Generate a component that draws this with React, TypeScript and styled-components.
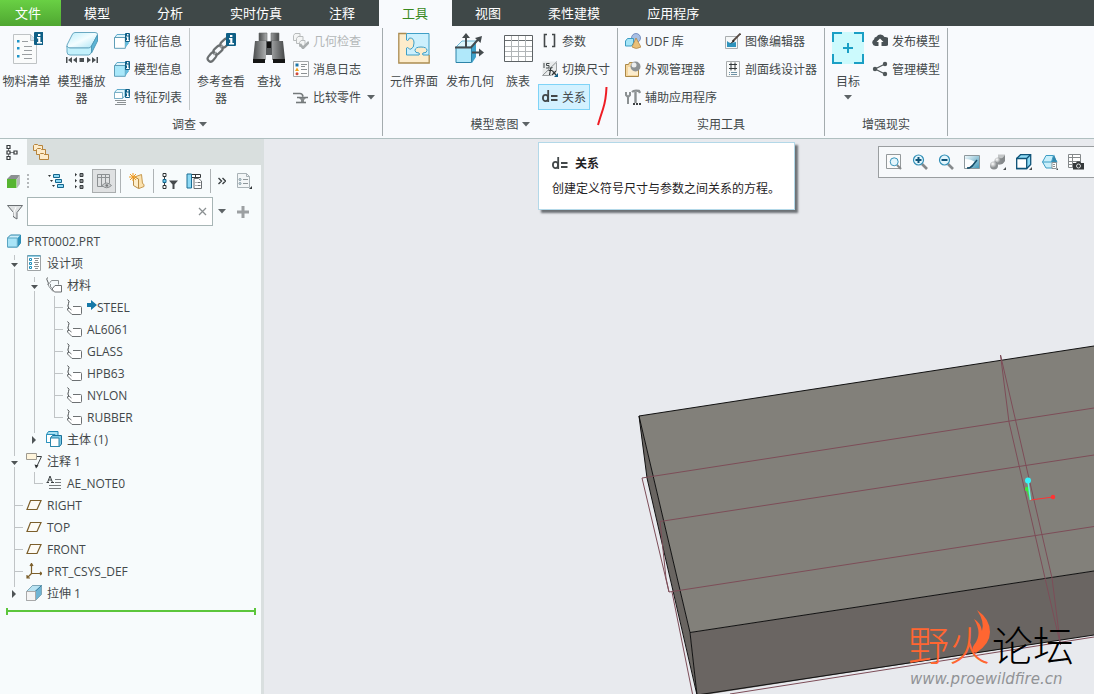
import React from 'react';
import styled, { createGlobalStyle, css } from 'styled-components';

const GlobalStyle = createGlobalStyle`
  * { box-sizing: border-box; }
  body {
    margin: 0;
    font-family: "Open Sans", "Noto Sans CJK SC", sans-serif;
    font-size: 12px;
    line-height: 17px;
    color: #43484a;
  }
  button, input { font: inherit; color: inherit; }
  svg { display: block; flex: none; }
`;

const Window = styled.div`
  display: flex;
  flex-direction: column;
  height: 100vh;
  overflow: hidden;
`;

/* ---------- menu tabs ---------- */

const MenuBar = styled.nav`
  display: flex;
  flex: none;
  height: 26px;
  background: #3f4848;
`;

const MenuTab = styled.button<{ $kind?: 'file' | 'active' }>`
  border: 0;
  padding: 0 24px 0 23px;
  font-size: 13px;
  line-height: 24px;
  white-space: nowrap;
  color: #fff;
  background: transparent;
  ${(p) => p.$kind === 'file' && css`
    padding: 0 20px 0 15px;
    background: linear-gradient(#69d044, #4fa631);
  `}
  ${(p) => p.$kind === 'active' && css`
    color: #3a8a1e;
    background: #f8fafd;
  `}
`;

/* ---------- ribbon ---------- */

const Ribbon = styled.header`
  display: flex;
  flex: none;
  height: 113px;
  padding-top: 2px;
  background: #f8fafd;
  border-bottom: 1px solid #b0bfc0;
`;

const Group = styled.section<{ $flush?: boolean }>`
  display: flex;
  flex-direction: column;
  flex: none;
  height: 108px;
  padding: 0 3px 0 ${(p) => (p.$flush ? 0 : 3)}px;
  border-right: 1px solid #a4abae;
`;

const GroupBody = styled.div`
  display: flex;
  height: 84px;
`;

const GroupLabel = styled.div`
  display: flex;
  flex: 1;
  align-items: center;
  justify-content: center;
  gap: 3px;
`;

const Divider = styled.div`
  width: 1px;
  height: 82px;
  margin: 0 3px;
  background: #c3c8ca;
`;

const BigButton = styled.button<{ $width: number }>`
  display: flex;
  flex-direction: column;
  align-items: center;
  gap: 9px;
  width: ${(p) => p.$width}px;
  padding: 4px 0 0;
  border: 0;
  background: transparent;
`;

const BigLabel = styled.span`
  display: flex;
  flex-direction: column;
  align-items: center;
  gap: 5px;
  width: 48px;
  line-height: 17px;
`;

const SmallColumn = styled.div`
  display: flex;
  flex-direction: column;
  align-items: flex-start;
  gap: 2px;
`;

const SmallButton = styled.button<{ $hot?: boolean }>`
  display: flex;
  align-items: center;
  gap: 4px;
  height: 26px;
  padding: 0 4px;
  border: 0;
  white-space: nowrap;
  background: transparent;
  &:disabled { color: #b3b7b8; }
  ${(p) => p.$hot && css`
    background: #d3f1ff;
    box-shadow: inset 0 0 0 1px #7fd3f7;
  `}
`;

const MenuMark = styled.span`
  margin-left: 2px;
`;

const HotItem = styled.div`
  position: relative;
`;

const Tooltip = styled.div`
  position: absolute;
  z-index: 5;
  top: 58px;
  left: 0;
  display: flex;
  flex-direction: column;
  gap: 8px;
  width: 257px;
  height: 68px;
  padding: 12px 13px;
  color: #1f2224;
  background: #fff;
  border: 1px solid #b3d8e8;
  box-shadow: 3px 3px 2px #6d7276;
`;

const TooltipTitle = styled.strong`
  display: flex;
  align-items: center;
  gap: 7px;
`;

const PenMark = styled.svg`
  position: absolute;
  z-index: 4;
  top: 2px;
  left: 58px;
`;

/* ---------- workspace ---------- */

const Workspace = styled.main`
  display: flex;
  flex: 1;
  min-height: 0;
`;

const Sidebar = styled.aside`
  display: flex;
  flex-direction: column;
  flex: none;
  width: 264px;
  background: #f7fbfc;
  border-right: 3px solid #d9dfdf;
`;

const PanelTabs = styled.div`
  display: flex;
  height: 26px;
  background: #d9dfde;
`;

const PanelTab = styled.button<{ $active?: boolean }>`
  display: flex;
  align-items: center;
  justify-content: center;
  width: ${(p) => (p.$active ? 27 : 30)}px;
  padding: 0 2px 0 0;
  border: 0;
  background: ${(p) => (p.$active ? '#f7fbfc' : 'transparent')};
`;

const PanelTools = styled.div`
  display: flex;
  align-items: center;
  height: 32px;
`;

const ToolButton = styled.button<{ $width?: number; $pressed?: boolean }>`
  display: flex;
  align-items: center;
  justify-content: center;
  width: ${(p) => p.$width ?? 24}px;
  height: 24px;
  padding: 0;
  border: ${(p) => (p.$pressed ? '1px solid #a9adae' : '0')};
  background: ${(p) => (p.$pressed ? '#dfe1e2' : 'transparent')};
`;

const ToolDivider = styled.div`
  width: 1px;
  height: 24px;
  margin: 0 4px;
  background: #aeb3b5;
`;

const Grip = styled.div`
  width: 2px;
  height: 14px;
  margin: 0 15px 0 1px;
  background: repeating-linear-gradient(#b4b8ba 0 2px, transparent 2px 4px);
`;

const FilterRow = styled.form`
  display: flex;
  align-items: center;
  height: 29px;
  margin-bottom: 4px;
`;

const FilterIcon = styled.label`
  width: 27px;
  padding-left: 7px;
`;

const FilterField = styled.div`
  display: flex;
  align-items: center;
  width: 186px;
  height: 29px;
  background: #fff;
  border: 1px solid #a7b5b5;
`;

const FilterInput = styled.input`
  flex: 1;
  min-width: 0;
  height: 27px;
  padding: 0 6px;
  border: 0;
  outline: 0;
  background: transparent;
`;

const Tree = styled.ul`
  margin: 0;
  padding: 0 0 0 4px;
  list-style: none;
`;

const TreeRow = styled.li`
  display: flex;
  align-items: center;
  height: 22px;
  white-space: nowrap;
`;

const TreeIcon = styled.span`
  width: 16px;
  margin: 0 5px 0 2px;
`;

const InsertLine = styled.div`
  height: 7px;
  margin: 4px 5px 0 6px;
  border: solid #5cc63c;
  border-width: 0 2px;
  background: linear-gradient(transparent 2px, #5cc63c 2px 4px, transparent 4px);
`;

const Canvas = styled.section`
  position: relative;
  flex: 1;
  min-width: 0;
  overflow: hidden;
  background: #e8eaee;
`;

const ViewTools = styled.div`
  position: absolute;
  top: 7px;
  right: 0;
  display: flex;
  align-items: center;
  height: 32px;
  padding: 0 5px 0 2px;
  background: #f7f9fb;
  border: 1px solid #9a9ea0;
  border-right: 0;
`;

const Watermark = styled.div`
  position: absolute;
  right: 18px;
  bottom: 6px;
  width: 168px;
  color: #000;
`;

const WatermarkName = styled.div`
  display: flex;
  gap: 2px;
  font-family: "Liberation Sans", "Noto Sans CJK SC", sans-serif;
  font-size: 41px;
  font-style: oblique 8deg;
  font-weight: 300;
  line-height: 46px;
  white-space: nowrap;
`;

const Ember = styled.span`
  color: #ff6631;
`;

const WatermarkUrl = styled.div`
  padding-left: 2px;
  font: italic 15px/18px "DejaVu Sans", sans-serif;
  color: #919396;
`;

const Flame = styled.svg`
  position: absolute;
  top: -14px;
  left: 60px;
`;

/* ---------- icons ---------- */

type IconProps = { children: React.ReactNode; size?: number };

const Icon = ({ children, size = 16 }: IconProps) => (
  <svg width={size} height={size} viewBox={`0 0 ${size} ${size}`} fill="none" aria-hidden="true">
    {children}
  </svg>
);

const Caret = () => (
  <svg width="8" height="5" viewBox="0 0 8 5" aria-hidden="true"><path d="M0 0h8L4 4.6z" fill="#5d6366" /></svg>
);

const InfoBadge = ({ x, y, big }: { x: number; y: number; big?: boolean }) => (
  <g transform={`translate(${x} ${y})`}>
    <rect width={big ? 10 : 5} height={big ? 13 : 9} rx="1" fill="#0f5f86" />
    {big ? <path d="M4 2h2.400v2H4zM3 5h3.400v5H8v1.500H3V10h1.200V6.500H3z" fill="#fff" />
      : <path d="M2 1h1.500v1.500H2zM1.200 3.400h2.300V7H4.200v1H1.200V7H2V4.400h-.8z" fill="#fff" />}
  </g>
);

const BomIcon = () => (
  <Icon size={32}>
    <path d="M2.500 2.500h17l6 6v23h-23z" fill="#fafbfb" stroke="#bfc3c5" />
    <path d="M19.500 2.500v6h6" fill="#d3e5f0" stroke="#bfc3c5" />
    <path d="M6 8h2.500v2.500H6zM6 15h2.500v2.500H6zM6 23h2.500v2.500H6z" fill="#1e94c8" />
    <path d="M11 9.500h6M13 14.500h8M13 18.500h8M11 22.500h10M13 26.500h8" stroke="#9a9ea1" />
    <InfoBadge big x={23} y={0} />
  </Icon>
);

const PlayerIcon = () => (
  <Icon size={32}>
    <defs>
      <linearGradient id="glass" x1="0" x2="1" y2="1"><stop stopColor="#b9eefb" /><stop offset=".5" stopColor="#f4fdff" /><stop offset="1" stopColor="#a5e2f4" /></linearGradient>
    </defs>
    <path d="M9 .5h20q3 0 2.500 2.500l-6 11q-1 2-3 2H3q-3 0-2-3L6 3q1-2.500 3-2.500z" fill="url(#glass)" stroke="#6aa9c2" />
    <path d="M1 14q1 2 3 2h18.500q2 0 3-2v6q-1 3-3 3H4q-3 0-3-3z" fill="#c3f1fc" stroke="#6aa9c2" />
    <path d="M25.500 14l6-11v6l-6 12z" fill="#5cb5d6" stroke="#4f9ab9" />
    <path d="M0 25h1.500v6H0zM6 25v6l-4-3zM11 25v6l-4-3zM13.500 26h4.500v4h-4.500zM21 25v6l4-3zM26 25v6l4-3zM30.500 25H32v6h-1.500z" fill="#4a4f52" />
  </Icon>
);

const FeatureInfoIcon = ({ fill }: { fill: string }) => (
  <Icon>
    <path d="M3 1.500h11v9l-3 4H.5V5z" fill="#dff4fb" stroke="#5faaca" />
    <path d="M.5 4.500h10.800v10.800H.5z" fill={fill} stroke="#5f9eb8" />
    <path d="M11.500 4.500l3-3v9l-3 4z" fill="#67bede" />
    <InfoBadge x={11} y={0} />
  </Icon>
);

const FeatureListIcon = () => (
  <Icon>
    <path d="M.5 3.500l2.500-3h8v6l-2.500 3h-8z" fill="#e4f6fc" stroke="#5faaca" />
    <path d="M.5 3.500h8v6h-8z" fill="#fff" stroke="#7db0c6" />
    <path d="M1 11.500h11M3 13.500h9M1 15.500h11" stroke="#8c9194" />
    <InfoBadge x={11} y={0} />
  </Icon>
);

const ReferenceIcon = () => (
  <Icon size={32}>
    <g stroke="#6b6f71" strokeWidth="2.200">
      <rect x="2" y="22" width="10" height="6" rx="3" transform="rotate(-50 7 25)" />
      <rect x="8" y="15" width="10" height="6" rx="3" transform="rotate(-42 13 18)" />
      <rect x="15" y="8" width="10" height="6" rx="3" transform="rotate(-42 20 11)" />
    </g>
    <path d="M8.500 23l3-3M15 16l3-3" stroke="#a3a7a9" strokeWidth="1.500" />
    <InfoBadge big x={21} y={1} />
  </Icon>
);

const BinocularsIcon = () => (
  <Icon size={32}>
    <defs>
      <linearGradient id="barrel" x1="0" x2="1"><stop stopColor="#4a4c4d" /><stop offset=".45" stopColor="#b8babb" /><stop offset="1" stopColor="#454748" /></linearGradient>
    </defs>
    <path d="M6 1h8v8H6zM18 1h8v8h-8z" fill="url(#barrel)" stroke="#6a6c6d" strokeWidth=".6" />
    <path d="M2 9h11v19H0zM19 9h11l2 19H19z" fill="url(#barrel)" />
    <path d="M13 9h6v14h-6z" fill="#55585a" />
    <path d="M14 10h4v6h-4z" fill="#111" />
    <path d="M0 27h12v4H0zM20 27h12v4H20z" fill="#151515" />
  </Icon>
);

const GeometryCheckIcon = () => (
  <Icon>
    <g fill="#f4f5f5" stroke="#b9bcbd">
      <path d="M.5 2.500l1.500-2h5v5l-1.500 2h-5z" /><path d="M3.500 5.500l1.500-2h5v5l-1.500 2h-5z" /><path d="M6.500 9.500l1.500-2h4v4l-1.500 2h-4z" />
    </g>
    <path d="M7 11l3 4 6-6" stroke="#a9adae" strokeWidth="2.500" />
  </Icon>
);

const MessageLogIcon = () => (
  <Icon>
    <path d="M.5.5h15v15H.5z" fill="#fdfdfd" stroke="#a3a7a9" />
    <path d="M2.500 2.500h3v3h-3z" fill="#1c75a8" /><path d="M2 10l2-3.500L6 10z" fill="#f0a21c" /><circle cx="4" cy="12.800" r="1.500" fill="#cf4a3c" />
    <path d="M8 3.500h6M8 5.500h4M8 8.500h6M8 12.500h6" stroke="#8c9194" />
  </Icon>
);

const CompareIcon = () => (
  <Icon>
    <path d="M0 4.500h7q2.500 0 3 3M4 8.500h11" stroke="#74797b" strokeWidth="1.600" />
    <path d="M6 9h7l-2 2v2H8v-2z" fill="#85898b" />
    <path d="M3 13.500h10" stroke="#74797b" strokeWidth="1.600" />
  </Icon>
);

const ComponentIcon = () => (
  <Icon size={32}>
    <path d="M.8 1.500h30.400v29.500H.8z" fill="#fdeccb" />
    <path d="M8.500 1.500H31V23H25q-1-1 0-2 4 0 4-2.500 0-3.500-6-3.500t-6 3.500q0 2.500 4 2.500 1 1 0 2H8.500v-7q1-1 2 0 1 2 2.500 1 3-1 3-6t-4-5q-1.500 0-1.500 2-1 1-2 0z" fill="#ccf0fd" stroke="#3f9fc6" />
    <path d="M8.500 1.500H.8v29.500h30.400V23" stroke="#ab8c51" strokeWidth="1.300" />
  </Icon>
);

const PublishGeometryIcon = () => (
  <Icon size={32}>
    <path d="M2 15l6-6h14l-4 6z" fill="#dff6fd" stroke="#6db6d3" />
    <path d="M18 15l4-5v15l-4 6z" fill="#3fa2cb" />
    <path d="M2 15.500h15.500v15H2z" fill="#b0e8fa" stroke="#2d83a8" />
    <path d="M1 15.500h16l8-9M12 15V5M18 20.500h8" stroke="#454b4e" strokeWidth="2" />
    <path d="M12 1l4 5H8zM28 4l-1.500 7-5.500-5zM30 20.500l-5 4v-8z" fill="#454b4e" />
  </Icon>
);

const FamilyTableIcon = () => (
  <Icon size={32}>
    <path d="M2.500 3.500h28v26h-28z" fill="#fff" stroke="#5d6265" />
    <path d="M3 8.500h27" stroke="#6a6f72" />
    <path d="M3 14.500h27M3 19.500h27M3 24.500h27" stroke="#b1b5b7" />
    <path d="M9.500 4v25M16.500 4v25M23.500 4v25" stroke="#b1b5b7" />
  </Icon>
);

const ParameterIcon = () => (
  <Icon><path d="M5 1.500H2.500v12H5M10 1.500h2.500v12H10" stroke="#43484a" strokeWidth="1.600" /></Icon>
);

const SwitchDimIcon = () => (
  <Icon>
    <path d="M.5.5h14v14H.5z" fill="#e9ebec" />
    <path d="M.5 14.500L15 .5" stroke="#8b9092" />
    <path d="M2 2v5M7.500 2.500h-3v2h2.500v2.500H4" stroke="#43484a" />
    <path d="M10.500 6.500q-2 0-2 2l-1 5.500M6.500 9.500h4M10.500 10l3.500 4M14 10l-4 4" stroke="#33383a" strokeWidth="1.200" />
    <path d="M16 12v4h-4z" fill="#12608a" />
    <path d="M.5 14.500h9M14.500 2v8" stroke="#9b9fa1" />
  </Icon>
);

const RelationIcon = () => (
  <Icon>
    <ellipse cx="3.500" cy="9" rx="2.600" ry="3.200" stroke="#43484a" strokeWidth="1.800" />
    <path d="M6.200 1v12" stroke="#43484a" strokeWidth="1.800" />
    <path d="M9 7H15.500M9 11H15.500" stroke="#43484a" strokeWidth="2" />
  </Icon>
);

const UdfIcon = () => (
  <Icon>
    <circle cx="11" cy="5" r="4.500" fill="#a9bfe3" stroke="#6480b8" strokeWidth=".8" />
    <path d="M.5 8l2-2.500h6V10l-2 3h-6z" fill="#a5e5f7" stroke="#3b9cc3" />
    <path d="M11 5l5 9q-5 3-9 0z" fill="#eac077" stroke="#ad8140" strokeWidth=".7" />
  </Icon>
);

const AppearanceIcon = () => (
  <Icon>
    <path d="M.5 3.500h3l1-2h3l1 2h5v12H.5z" fill="#f5d7a0" stroke="#ab8847" />
    <path d="M3 6h10v8H3z" fill="#fbeccd" />
    <circle cx="10.500" cy="5.500" r="5" fill="#8d9295" /><circle cx="9" cy="4" r="2.500" fill="#eceeef" />
  </Icon>
);

const AuxiliaryIcon = () => (
  <Icon>
    <path d="M1 3v3l2 2 2-2V3M3 8v7" stroke="#8b9092" strokeWidth="2" />
    <path d="M7 3q2-2 7-1l1 2M10.500 3v11" stroke="#8b9092" strokeWidth="2.400" />
    <path d="M8 14h2v2H8zM11 14h2v2h-2zM14 14h2v2h-2z" fill="#3d4143" />
  </Icon>
);

const ImageEditorIcon = () => (
  <Icon>
    <path d="M.5 3.500h12v12H.5z" fill="#f5f7f8" stroke="#a9adaf" />
    <path d="M2 8q2 2 4 2l5-1v5H2z" fill="#2f93bd" />
    <path d="M15.500.500l-8 8" stroke="#564a42" strokeWidth="1.800" /><path d="M8.500 7l1 1.500L5 11z" fill="#222" />
  </Icon>
);

const HatchIcon = () => (
  <Icon>
    <path d="M1.500.5h13v15h-13z" fill="#f9fafa" stroke="#a9adaf" />
    <path d="M6 1.500v8M10 1.500v8M4 3.500h8M4 7.500h8" stroke="#34393b" />
    <path d="M4 11.500h1M6 11.500h6M4 13.500h1M6 13.500h6" stroke="#6f92a5" />
  </Icon>
);

const TargetIcon = () => (
  <Icon size={32}>
    <path d="M0 0h32v32H0z" fill="#ccfafd" />
    <path d="M1 10V1h9M22 1h9v9M31 22v9h-9M10 31H1v-9M16 11v10M11 16h10" stroke="#1b9fc5" strokeWidth="2" />
  </Icon>
);

const CloudIcon = () => (
  <Icon>
    <path d="M3.500 13A3.500 3.500 0 0 1 2 6.500a3 3 0 0 1 2.500-2.700A4.500 4.500 0 0 1 12.500 4 4 4 0 0 1 14 13z" fill="#4a5256" />
    <path d="M8 5.500l3.500 3.500h-2v5h-3V9h-2z" fill="#fff" />
  </Icon>
);

const ShareIcon = () => (
  <Icon>
    <path d="M14 2.500L3 8l11 5.500" stroke="#4f5659" strokeWidth="1.200" />
    <circle cx="13" cy="3" r="2.200" fill="#4f5659" /><circle cx="3" cy="8" r="2.200" fill="#4f5659" /><circle cx="13" cy="13" r="2.200" fill="#4f5659" />
  </Icon>
);

const HierarchyIcon = () => (
  <Icon>
    <path d="M3.500 4v9M5 8.500h6" stroke="#7d8183" />
    <path d="M2 1.500h3v3H2zM2 7h3v3H2zM2 12.500h3v3H2zM9 7h3v3H9z" fill="#fff" stroke="#34393b" strokeWidth="1.200" />
  </Icon>
);

const FoldersIcon = () => (
  <Icon>
    {[[0, 0], [3, 4], [6, 9]].map(([x, y]) => (
      <path key={x} d={`M${x + 0.5} ${y + 1.5}l1-1h3l1 1h4v5h-9z`} fill="#fdeccb" stroke="#b7843c" />
    ))}
  </Icon>
);

const GreenCubeIcon = () => (
  <Icon>
    <path d="M2 6l4-4h9l-3 4z" fill="#8b8f91" /><path d="M12 6l3-4v9l-3 4z" fill="#b8bbbc" />
    <path d="M2 6h9.500v9H2z" fill="#57b531" />
  </Icon>
);

const TreeCollapseIcon = () => (
  <Icon>
    <path d="M0 2h3L1.500 4zM2 7h3L3.500 9zM4 12h3l-1.500 2z" fill="#2f3436" />
    <path d="M5.500 1.500h6v3h-6zM7.500 6.500h6v3h-6zM9.500 11.500h6v3h-6z" fill="#8edaf5" stroke="#15658c" />
  </Icon>
);

const TreeExpandIcon = () => (
  <Icon>
    <path d="M3 0l2 1.500L3 3.500zM3 6l2 1.500L3 9.500zM3 12l2 1.500-2 2z" fill="#2f3436" />
    <path d="M8 .5h3v3H8zM8 6.500h3v3H8zM8 12.500h3v3H8z" fill="#898e90" stroke="#3a3f41" />
  </Icon>
);

const ColumnsEyeIcon = () => (
  <Icon>
    <path d="M1.500 1.500h12v9M1.500 1.500v12h6M2 4.500h11M5.500 2v11M9.500 2v8" stroke="#8c9092" />
    <path d="M6 12.500q4.500-5 9.500 0-5 4.500-9.500 0z" fill="#c9cccd" stroke="#8c9092" /><circle cx="10.800" cy="12.500" r="1.300" fill="#77797b" />
  </Icon>
);

const ShowFolderIcon = () => (
  <Icon>
    <path d="M5.500 4l7-2.500 1 9 1.500 1v2l-5 2z" fill="#fbe2ae" stroke="#c79a50" />
    <path d="M4.500 3.500l5 2.500v9.500l-5-3z" fill="#fdeecb" stroke="#b88c45" />
    <path d="M4 0v8M0 4h8M1 1l6 6M7 1L1 7" stroke="#f19a1d" />
  </Icon>
);

const TreeFilterIcon = () => (
  <Icon>
    <path d="M2.500 2v12" stroke="#3d4244" />
    <path d="M1 .5h3v3H1zM1 12.500h3v3H1z" fill="#fff" stroke="#2f3436" /><path d="M1 6.500h3v3H1z" fill="#6bc9ea" stroke="#15658c" />
    <path d="M7 7.500h9l-3.500 4V16h-2v-4.500z" fill="#45494c" />
  </Icon>
);

const TreeColumnsIcon = () => (
  <Icon>
    <path d="M1.500 1.500h13v3h-13zM9.500 2v3" fill="#fff" stroke="#34393b" /><path d="M1 1h4.500v14H1z" fill="#8edaf5" stroke="#1b6e95" />
    <path d="M8 5.500h4.500L15.500 8v7.500H8z" fill="#fff" stroke="#6a6f72" /><path d="M9.500 9.500h1m1 0h3m-5 3h1m1 0h3" stroke="#6a6f72" />
  </Icon>
);

const SettingsDocIcon = () => (
  <Icon>
    <path d="M1.500.5h9l3 3v11h-12z" fill="#f3f6f7" stroke="#a9b2b6" /><path d="M10.500.5v3h3" stroke="#a9b2b6" />
    <circle cx="4" cy="6.500" r="1" stroke="#7e96a1" /><circle cx="4" cy="10.500" r="1" stroke="#7e96a1" /><path d="M7 6.500h5M7 10.500h5" stroke="#8e9699" />
    <path d="M16 13v3h-3z" fill="#34393b" />
  </Icon>
);

const FunnelIcon = () => (
  <Icon>
    <path d="M.5 1.500h15L10 8.500V15l-3.500-2V8.500z" fill="#dfe2e3" stroke="#6a6f72" /><path d="M9 3l-2 5v4" stroke="#fff" />
  </Icon>
);

const PartIcon = () => (
  <Icon>
    <path d="M1.500 5l3-3h10v8l-3 4h-10z" fill="#cdeffa" stroke="#2c86ab" /><path d="M11.500 5l3-3v8l-3 4z" fill="#2f93bd" /><path d="M1.500 5h9.800v9H1.500z" fill="#a9e4f7" stroke="#5ba5c2" />
  </Icon>
);

const DesignItemsIcon = () => (
  <Icon>
    <path d="M1.500.5h13v15h-13z" fill="#fff" stroke="#9fa4a6" /><path d="M1.500 1h13" stroke="#1f9bc9" />
    <path d="M3.500 3.500h2v2h-2zM3.500 7.500h2v2h-2zM3.500 11.500h2v2h-2z" stroke="#1f8fbb" />
    <path d="M8 3.500h5M9 5.500h3M8 7.500h5M9 9.500h3M8 11.500h5M9 13.500h3" stroke="#8b8f91" />
  </Icon>
);

const MaterialsIcon = () => (
  <Icon>
    <path d="M1.500.5Q0 2 1.500 4t.5 4" stroke="#5c6062" />
    <path d="M4 5.500l1.500-2h7v4M4 5.500q-3 2-1 4l4 5M4.500 7v3l4 3" stroke="#8b8f91" />
    <path d="M9 8.500h6.500v6.500H8.500L6 12z" fill="#fff" stroke="#6d7173" />
  </Icon>
);

const MaterialIcon = () => (
  <Icon>
    <path d="M7 7.500h7.500q1 0 1 1v6q0 1-1 1H6L2.500 12l1.500-2z" fill="#fff" />
    <path d="M7 7.500h7.500q1 0 1 1v6q0 1-1 1H6L1.500 11q-1-2 2-1.500L5.500 11" stroke="#6d7173" />
    <path d="M1.500.5Q4 2 2.500 4.500t.5 5" stroke="#4c5052" />
  </Icon>
);

const BodiesIcon = () => (
  <Icon>
    <path d="M.5 3.500l2-3h9.500v8l-2 3H.5z" fill="#a9e0f2" stroke="#2088b4" /><path d="M.5 3.500h8.500v8H.5z" fill="#fff" stroke="#2c93bd" />
    <path d="M4.500 7l2-2.500h9v8.500l-2 2.500h-9z" fill="#7cc9e5" stroke="#1a7099" /><path d="M4.500 7h8.500v8.500H4.500z" fill="#fff" stroke="#2c86ab" />
  </Icon>
);

const AnnotationIcon = () => (
  <Icon>
    <path d="M.5.5h10v6H.5z" fill="#fff5dc" stroke="#9e9a90" /><path d="M11 3.500h4.500L11 13" stroke="#3b4042" /><path d="M8.500 11.500l4 1-2.500 3z" fill="#2c3032" />
  </Icon>
);

const NoteIcon = () => (
  <Icon>
    <path d="M.5 7.500h2.500M5 7.500h3M1.500 7.500L4 1l2.500 6.500M2.500 5h3" stroke="#3b4042" /><path d="M9 4.500h6M9 7.500h6M3 10.500h12M3 13.500h12" stroke="#777b7d" />
  </Icon>
);

const PlaneIcon = () => (
  <Icon><path d="M4.500 3.500h10.500L11 12.500H1z" fill="#fdfbf5" stroke="#7c5f2b" strokeWidth="1.200" /></Icon>
);

const CsysIcon = () => (
  <Icon>
    <path d="M5.500 1v9.500H16M5.500 10.500L1 15M4 3l1.500-2.500L7 3M14 9l2 1.500L14 12M1 12v3h3" stroke="#7c5f2b" strokeWidth="1.200" />
  </Icon>
);

const ExtrudeIcon = () => (
  <Icon>
    <path d="M.5 6.500l6-6h9v9l-6 6h-9z" fill="#6fb4d3" stroke="#7fa7b8" /><path d="M.5 6.500L6.500.5h9l-6 6z" fill="#b9e3f2" stroke="#7fa7b8" /><path d="M9 6.500L15.500.5" stroke="#2f7ea3" />
    <path d="M.5 6.500h9v9h-9z" fill="#f4f4f4" stroke="#a9a9a9" />
  </Icon>
);

const ArrowIcon = () => (
  <svg width="10" height="16" viewBox="0 0 10 16" aria-hidden="true"><path d="M0 4h4V1l6 5-6 5V8H0z" fill="#1679a8" /></svg>
);

const Magnifier = ({ sign }: { sign?: 'plus' | 'minus' }) => (
  <>
    <path d="M10 10l5 5" stroke="#85898b" strokeWidth="2.600" />
    <circle cx="6.500" cy="6" r="5" fill="#e3f6fd" stroke="#318fb7" strokeWidth="1.200" />
    {sign && <path d="M3.500 6h6" stroke="#0f5479" strokeWidth="2" />}
    {sign === 'plus' && <path d="M6.500 3v6" stroke="#0f5479" strokeWidth="2" />}
  </>
);

const viewIcons: { name: string; icon: React.ReactNode }[] = [
  { name: '重新调整', icon: <Icon><path d="M.5.5h14v14H.5z" fill="#fbfbfb" stroke="#94999b" /><g transform="translate(3 3) scale(.8)"><Magnifier /></g></Icon> },
  { name: '放大', icon: <Icon><Magnifier sign="plus" /></Icon> },
  { name: '缩小', icon: <Icon><Magnifier sign="minus" /></Icon> },
  { name: '重画', icon: <Icon><defs><linearGradient id="sky" x1="0" x2="1" y2="1"><stop stopColor="#f6fbfd" /><stop offset="1" stopColor="#3f97b8" /></linearGradient></defs><path d="M.5 1.500h15v13H.5z" fill="url(#sky)" stroke="#8d989d" /><path d="M1 5q6 0 10 3l-3 4-5 2H1z" fill="#fdfeff" /><path d="M3 14q4 0 6-3l4-5" stroke="#164d69" strokeWidth="1.500" /></Icon> },
  { name: '渲染选项', icon: <Icon><defs><radialGradient id="ball" cx=".35" cy=".3"><stop stopColor="#fff" /><stop offset="1" stopColor="#8b8f91" /></radialGradient></defs><path d="M8 .500h7v6q-3 5-7 3z" fill="#c3c6c7" /><path d="M8 4q4 2 7-3v6q-3 5-7 3z" fill="#85898b" /><circle cx="8" cy="7" r="3.500" fill="url(#ball)" /><circle cx="4" cy="11.500" r="4" fill="url(#ball)" /><path d="M16 13v3h-3z" fill="#4a4e50" /></Icon> },
  { name: '显示样式', icon: <Icon><path d="M.7 4.500l4-4h10v10l-4 4H.7z" fill="#8edaf5" stroke="#0f5479" strokeWidth="1.300" /><path d="M.7 4.500h10v10H.7zM10.700 4.500l4-4" fill="#fff" stroke="#0f5479" strokeWidth="1.300" /><path d="M16 13v3h-3z" fill="#4a4e50" /></Icon> },
  { name: '已命名视图', icon: <Icon><path d="M.5 8L4 1.500h7l4 6.500-4 6H4z" fill="#c8effb" stroke="#3d9cc3" /><path d="M9.500 8L12 .5 15 8z" fill="#3487ad" /><path d="M.5 8H15M9.500 8l2-6.500" stroke="#3d9cc3" /><path d="M10 8.500h4.500v6H10z" fill="#fff" stroke="#8c9193" /><path d="M11 10.500h2M11 12.500h2" stroke="#8c9193" /><path d="M16 14v2h-2z" fill="#4a4e50" /></Icon> },
  { name: '视图管理器', icon: <Icon><path d="M.5.5h12v13H.5zM.5 3.500h12M.5 7.500h12M.5 10.500h12M4.500.5v13" fill="#fff" stroke="#85898b" /><path d="M5 9h3l1-1.500h3L13 9h3v6.500H5z" fill="#35393b" /><circle cx="10.500" cy="12" r="2" stroke="#d7d9da" /></Icon> },
];

/* ---------- model tree ---------- */

type Guide = 'line' | 'tee' | 'end' | 'open' | 'first' | 'closed';

const guidePaths: Record<Guide, string> = {
  line: 'M10.500 0v22',
  tee: 'M10.500 0v22M11 11.500h8',
  end: 'M10.500 0v12M11 11.500h8',
  open: 'M10.500 0v6M10.500 17v5',
  first: 'M10.500 3v5M10.500 17v5',
  closed: 'M10.500 0v5',
};

const GuideCell = ({ kind }: { kind: Guide }) => (
  <svg width="20" height="22" viewBox="0 0 20 22" aria-hidden="true">
    <path d={guidePaths[kind]} stroke="#c0c4c6" fill="none" />
    {(kind === 'open' || kind === 'first') && <path d="M7 11h7l-3.500 4z" fill="#4f5456" />}
    {kind === 'closed' && <path d="M8 8l4 4-4 4z" fill="#4f5456" />}
  </svg>
);

type TreeItem = { label: string; icon: React.ReactNode; guides: Guide[]; assigned?: boolean };

const material = (label: string, last?: boolean): TreeItem => ({
  label, icon: <MaterialIcon />, guides: ['line', 'line', last ? 'end' : 'tee'],
});

const treeItems: TreeItem[] = [
  { label: 'PRT0002.PRT', icon: <PartIcon />, guides: [] },
  { label: '设计项', icon: <DesignItemsIcon />, guides: ['first'] },
  { label: '材料', icon: <MaterialsIcon />, guides: ['line', 'first'] },
  { ...material('STEEL'), assigned: true },
  material('AL6061'),
  material('GLASS'),
  material('HPB63'),
  material('NYLON'),
  material('RUBBER', true),
  { label: '主体 (1)', icon: <BodiesIcon />, guides: ['line', 'closed'] },
  { label: '注释 1', icon: <AnnotationIcon />, guides: ['open'] },
  { label: 'AE_NOTE0', icon: <NoteIcon />, guides: ['line', 'end'] },
  { label: 'RIGHT', icon: <PlaneIcon />, guides: ['tee'] },
  { label: 'TOP', icon: <PlaneIcon />, guides: ['tee'] },
  { label: 'FRONT', icon: <PlaneIcon />, guides: ['tee'] },
  { label: 'PRT_CSYS_DEF', icon: <CsysIcon />, guides: ['tee'] },
  { label: '拉伸 1', icon: <ExtrudeIcon />, guides: ['closed'] },
];

/* ---------- small composed parts ---------- */

type CommandProps = { icon: React.ReactNode; label: string; disabled?: boolean; hot?: boolean; menu?: boolean };

const Command = ({ icon, label, disabled, hot, menu }: CommandProps) => (
  <SmallButton type="button" disabled={disabled} $hot={hot}>
    {icon}
    {label}
    {menu && <MenuMark><Caret /></MenuMark>}
  </SmallButton>
);

const BigCommand = ({ icon, label, width = 56, menu }: { icon: React.ReactNode; label: string; width?: number; menu?: boolean }) => (
  <BigButton type="button" $width={width}>
    {icon}
    <BigLabel>{label}{menu && <Caret />}</BigLabel>
  </BigButton>
);

const Part = () => (
  <svg width="100%" height="100%" viewBox="264 139 830 555" preserveAspectRatio="xMaxYMax slice" fill="none" role="img" aria-label="PRT0002">
    <path d="M639 416L1094 346V571L690 632.500z" fill="#82807a" />
    <path d="M639 416L690 632.500 697 694 647 478z" fill="#696561" />
    <path d="M690 632.500L1094 571V635L697 696z" fill="#6a6562" />
    <path d="M1094 346L639 416 690 632.500 1094 571M690 632.500L697 695 1094 635M639 416L647 478 697 695" stroke="#111" />
    <g stroke="#7d4d58">
      <path d="M1094 408L642 478 669 592 1094 526.500M1094 455L660 521.500 666 578 669 592M672 592L692.500 694M730 694L1094 637" />
      <path d="M1000.500 355L1009 422 1045 578 1060.500 645 1052 578 1015.500 420z" />
    </g>
    <path d="M1030.500 500L1053 497" stroke="#f33" /><circle cx="1053" cy="497" r="2.200" fill="#f33" />
    <path d="M1030.500 500L1027 489" stroke="#3be83b" strokeWidth="1.500" /><circle cx="1027" cy="489" r="2.200" fill="#3be83b" />
    <path d="M1030.500 500L1028 481" stroke="#5ff3e8" strokeWidth="1.500" /><circle cx="1028" cy="480.500" r="3" fill="#35f4fb" />
  </svg>
);

const menuTabs = ['模型', '分析', '实时仿真', '注释', '工具', '视图', '柔性建模', '应用程序'];

export default function App() {
  return (
    <Window>
      <GlobalStyle />
      <MenuBar>
        <MenuTab type="button" $kind="file">文件</MenuTab>
        {menuTabs.map((name) => (
          <MenuTab type="button" key={name} $kind={name === '工具' ? 'active' : undefined}>{name}</MenuTab>
        ))}
      </MenuBar>

      <Ribbon>
        <Group $flush>
          <GroupBody>
            <BigCommand icon={<BomIcon />} label="物料清单" width={53} />
            <BigCommand icon={<PlayerIcon />} label="模型播放器" width={57} />
            <SmallColumn>
              <Command icon={<FeatureInfoIcon fill="#fff" />} label="特征信息" />
              <Command icon={<FeatureInfoIcon fill="#a9e8fa" />} label="模型信息" />
              <Command icon={<FeatureListIcon />} label="特征列表" />
            </SmallColumn>
            <Divider />
            <BigCommand icon={<ReferenceIcon />} label="参考查看器" />
            <BigCommand icon={<BinocularsIcon />} label="查找" width={40} />
            <SmallColumn>
              <Command icon={<GeometryCheckIcon />} label="几何检查" disabled />
              <Command icon={<MessageLogIcon />} label="消息日志" />
              <Command icon={<CompareIcon />} label="比较零件" menu />
            </SmallColumn>
          </GroupBody>
          <GroupLabel>调查<Caret /></GroupLabel>
        </Group>

        <Group>
          <GroupBody>
            <BigCommand icon={<ComponentIcon />} label="元件界面" />
            <BigCommand icon={<PublishGeometryIcon />} label="发布几何" />
            <BigCommand icon={<FamilyTableIcon />} label="族表" width={40} />
            <SmallColumn>
              <Command icon={<ParameterIcon />} label="参数" />
              <Command icon={<SwitchDimIcon />} label="切换尺寸" />
              <HotItem>
                <Command icon={<RelationIcon />} label="关系" hot />
                <PenMark width="14" height="42" viewBox="0 0 14 42" fill="none" aria-hidden="true">
                  <path d="M10.500 1Q10 14 7 23T2 39" stroke="#ee1c24" strokeWidth="2" />
                </PenMark>
                <Tooltip role="tooltip">
                  <TooltipTitle><RelationIcon />关系</TooltipTitle>
                  <span>创建定义符号尺寸与参数之间关系的方程。</span>
                </Tooltip>
              </HotItem>
            </SmallColumn>
          </GroupBody>
          <GroupLabel>模型意图<Caret /></GroupLabel>
        </Group>

        <Group>
          <GroupBody>
            <SmallColumn>
              <Command icon={<UdfIcon />} label="UDF 库" />
              <Command icon={<AppearanceIcon />} label="外观管理器" />
              <Command icon={<AuxiliaryIcon />} label="辅助应用程序" />
            </SmallColumn>
            <SmallColumn>
              <Command icon={<ImageEditorIcon />} label="图像编辑器" />
              <Command icon={<HatchIcon />} label="剖面线设计器" />
            </SmallColumn>
          </GroupBody>
          <GroupLabel>实用工具</GroupLabel>
        </Group>

        <Group>
          <GroupBody>
            <BigCommand icon={<TargetIcon />} label="目标" width={40} menu />
            <SmallColumn>
              <Command icon={<CloudIcon />} label="发布模型" />
              <Command icon={<ShareIcon />} label="管理模型" />
            </SmallColumn>
          </GroupBody>
          <GroupLabel>增强现实</GroupLabel>
        </Group>
      </Ribbon>

      <Workspace>
        <Sidebar>
          <PanelTabs>
            <PanelTab type="button" aria-label="模型树" $active><HierarchyIcon /></PanelTab>
            <PanelTab type="button" aria-label="文件夹浏览器"><FoldersIcon /></PanelTab>
          </PanelTabs>
          <PanelTools>
            <ToolButton type="button" aria-label="主体" $width={26}><GreenCubeIcon /></ToolButton>
            <Grip />
            <ToolButton type="button" aria-label="全部折叠"><TreeCollapseIcon /></ToolButton>
            <ToolButton type="button" aria-label="全部展开"><TreeExpandIcon /></ToolButton>
            <ToolButton type="button" aria-label="显示列" $pressed><ColumnsEyeIcon /></ToolButton>
            <ToolDivider />
            <ToolButton type="button" aria-label="新建组"><ShowFolderIcon /></ToolButton>
            <ToolDivider />
            <ToolButton type="button" aria-label="树过滤器"><TreeFilterIcon /></ToolButton>
            <ToolButton type="button" aria-label="树列"><TreeColumnsIcon /></ToolButton>
            <ToolDivider />
            <ToolButton type="button" aria-label="更多" $width={14}>
              <svg width="8" height="8" viewBox="0 0 8 8" fill="none"><path d="M.5 1l3 3-3 3M4.500 1l3 3-3 3" stroke="#3a3f41" strokeWidth="1.400" /></svg>
            </ToolButton>
            <ToolButton type="button" aria-label="设置" $width={30}><SettingsDocIcon /></ToolButton>
          </PanelTools>
          <FilterRow>
            <FilterIcon htmlFor="tree-filter" aria-label="过滤"><FunnelIcon /></FilterIcon>
            <FilterField>
              <FilterInput id="tree-filter" type="text" />
              <ToolButton type="button" aria-label="清除" $width={20}>
                <svg width="9" height="9" viewBox="0 0 9 9"><path d="M1 1l7 7M8 1L1 8" stroke="#8b9092" strokeWidth="1.300" /></svg>
              </ToolButton>
            </FilterField>
            <ToolButton type="button" aria-label="过滤选项" $width={18}><Caret /></ToolButton>
            <ToolButton type="button" aria-label="添加">
              <svg width="12" height="12" viewBox="0 0 12 12"><path d="M6 0v12M0 6h12" stroke="#9ca0a2" strokeWidth="3" /></svg>
            </ToolButton>
          </FilterRow>
          <Tree>
            {treeItems.map((item) => (
              <TreeRow key={item.label}>
                {item.guides.map((kind, i) => <GuideCell key={i} kind={kind} />)}
                <TreeIcon>{item.icon}</TreeIcon>
                {item.assigned && <ArrowIcon />}
                {item.label}
              </TreeRow>
            ))}
          </Tree>
          <InsertLine />
        </Sidebar>

        <Canvas>
          <Part />
          <ViewTools>
            {viewIcons.map((tool) => (
              <ToolButton type="button" key={tool.name} aria-label={tool.name} $width={26}>{tool.icon}</ToolButton>
            ))}
          </ViewTools>
          <Watermark>
            <WatermarkName><Ember>野火</Ember><span>论坛</span></WatermarkName>
            <WatermarkUrl>www.proewildfire.cn</WatermarkUrl>
            <Flame width="26" height="46" viewBox="0 0 26 46" aria-hidden="true">
              <path d="M9 0Q22 9 22 22 22 34 8 43 2 40 6 35 15 24 6 9q7 4 8 12Q17 12 9 0z" fill="#ff6631" />
            </Flame>
          </Watermark>
        </Canvas>
      </Workspace>
    </Window>
  );
}
